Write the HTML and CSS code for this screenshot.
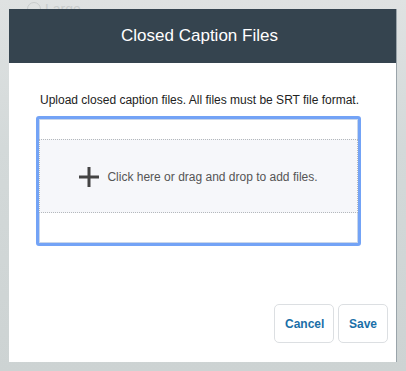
FILE: index.html
```html
<!DOCTYPE html>
<html lang="en">
<head>
    <meta charset="UTF-8">
    <title>Closed Caption Files</title>
    <link rel="stylesheet" href="styles.css">
</head>
<body>
    <div class="backdrop-label"><span class="radio"></span>Large</div>
    <div class="modal">
        <div class="modal-header">Closed Caption Files</div>
        <div class="modal-body">
            <p class="hint">Upload closed caption files. All files must be SRT file format.</p>
            <div class="dropzone">
                <div class="drop-target">
                    <svg class="plus" width="20" height="20" viewBox="0 0 20 20">
                        <path d="M10 0v20M0 10h20" stroke="#444" stroke-width="3"/>
                    </svg>
                    <span>Click here or drag and drop to add files.</span>
                </div>
            </div>
        </div>
        <div class="modal-footer">
            <button class="btn">Cancel</button>
            <button class="btn">Save</button>
        </div>
    </div>
</body>
</html>
```

FILE: styles.css
```css
html, body {
    margin: 0;
    height: 100%;
}

body {
    background: linear-gradient(180deg, #dfe2e2 0%, #d3d9d9 40%, #cdd3d3 100%);
    font-family: "Liberation Sans", Arial, sans-serif;
    padding: 9px 0 0 9px;
    box-sizing: border-box;
    overflow: hidden;
}

.backdrop-label {
    position: absolute;
    top: 1px;
    left: 27px;
    color: #c8cccc;
    font-size: 14px;
    display: flex;
    align-items: center;
    gap: 4px;
}

.radio {
    width: 12px;
    height: 12px;
    border: 1px solid #c8cccc;
    border-radius: 50%;
}

.modal {
    position: relative;
    width: 387px;
    height: 353px;
    background: #fff;
    display: flex;
    flex-direction: column;
    box-shadow: 1px 0 0 #9aa4aa;
}

.modal-header {
    height: 54px;
    background-color: #35444f;
    color: #fff;
    font-size: 17px;
    display: flex;
    align-items: center;
    justify-content: center;
    flex-shrink: 0;
    padding-right: 6px;
}

.modal-body {
    padding: 29px 0 0 27px;
}

.hint {
    margin: 0 0 8px;
    font-size: 12px;
    line-height: 16px;
    color: #222;
    padding-left: 4px;
}

.dropzone {
    width: 325px;
    height: 130px;
    box-sizing: border-box;
    border: 3px solid #73a3f6;
    border-radius: 3px;
    padding: 20px 0 0;
    background: #fff;
    box-shadow: inset 0 0 0 1px #c9d6ea;
}

.drop-target {
    height: 74px;
    box-sizing: border-box;
    border: 1px dotted #b4b8bc;
    background: #f6f7fa;
    display: flex;
    align-items: center;
    justify-content: center;
    gap: 8px;
    padding-top: 1px;
    font-size: 12px;
    color: #555;
}

.plus {
    display: block;
}

.modal-footer {
    margin-top: auto;
    display: flex;
    justify-content: flex-end;
    gap: 4px;
    padding: 0 8px 19px 0;
}

.btn {
    height: 39px;
    background: #fff;
    border: 1px solid #dcdfe2;
    border-radius: 5px;
    color: #1a6fa8;
    font-family: "Liberation Sans", Arial, sans-serif;
    font-size: 12px;
    font-weight: bold;
    padding: 0 10px;
    cursor: pointer;
}

.btn:first-child {
    width: 60px;
}

.btn:last-child {
    width: 50px;
}
```
